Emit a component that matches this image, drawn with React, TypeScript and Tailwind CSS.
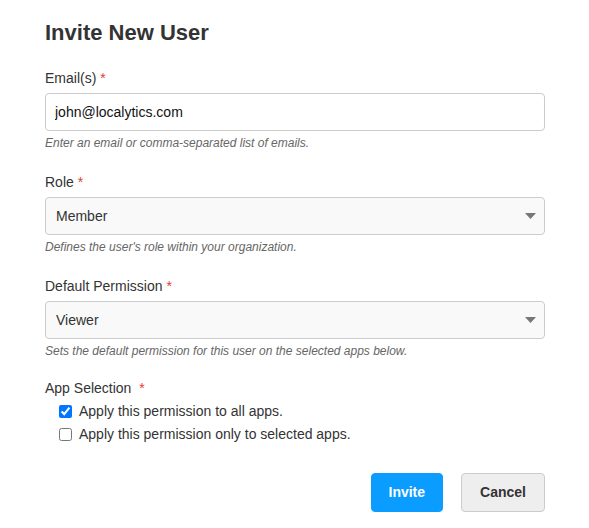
import React, { useState } from 'react';

const Required = () => <span className="text-[#e53935] ml-1">*</span>;

const Help = ({ children }: { children: React.ReactNode }) => (
  <p className="mt-1 text-[12px] leading-4 italic text-[#666]">{children}</p>
);

const Select = ({ value }: { value: string }) => (
  <div className="mt-[5px] h-[38px] flex items-center justify-between rounded border border-[#ccc] bg-[#f9f9f9] pl-[10px] pr-[8px] text-[14px] text-[#333]">
    <span>{value}</span>
    <svg width="11" height="6" viewBox="0 0 11 6">
      <path d="M0 0 H11 L5.5 6 Z" fill="#777" />
    </svg>
  </div>
);

export default function App() {
  const [email, setEmail] = useState('john@localytics.com');
  const [allApps, setAllApps] = useState(true);

  return (
    <div className="min-h-screen bg-white font-['Liberation_Sans',Arial,sans-serif] text-[#333]">
      <div className="ml-[45px] w-[500px] pt-[20px]">
        <h1 className="text-[22px] leading-[26px] font-bold text-[#333]">Invite New User</h1>

        {/* Emails */}
        <div className="mt-[22px]">
          <label className="block text-[14px] leading-5">
            Email(s)
            <Required />
          </label>
          <input
            value={email}
            onChange={(e) => setEmail(e.target.value)}
            className="mt-[5px] block w-full h-[38px] rounded border border-[#ccc] bg-white px-[9px] text-[14px] text-[#111] outline-none"
          />
          <Help>Enter an email or comma-separated list of emails.</Help>
        </div>

        {/* Role */}
        <div className="mt-[21px]">
          <label className="block text-[14px] leading-5">
            Role
            <Required />
          </label>
          <Select value="Member" />
          <Help>Defines the user's role within your organization.</Help>
        </div>

        {/* Default permission */}
        <div className="mt-[21px]">
          <label className="block text-[14px] leading-5">
            Default Permission
            <Required />
          </label>
          <Select value="Viewer" />
          <Help>Sets the default permission for this user on the selected apps below.</Help>
        </div>

        {/* App selection */}
        <div className="mt-[19px]">
          <label className="block text-[14px] leading-5">
            App Selection <Required />
          </label>
          <div className="mt-[3px] flex flex-col gap-[3px] pl-[14px]">
            <label className="flex items-center gap-[7px] text-[14px] leading-5">
              <input
                type="checkbox"
                checked={allApps}
                onChange={() => setAllApps(true)}
                className="m-0 w-[13px] h-[13px]"
              />
              Apply this permission to all apps.
            </label>
            <label className="flex items-center gap-[7px] text-[14px] leading-5">
              <input
                type="checkbox"
                checked={!allApps}
                onChange={() => setAllApps(false)}
                className="m-0 w-[13px] h-[13px]"
              />
              Apply this permission only to selected apps.
            </label>
          </div>
        </div>

        <div className="mt-[29px] flex justify-end gap-[18px]">
          <button className="h-[39px] px-[17px] rounded border border-[#0a9cff] bg-[#0a9cff] text-[14px] font-bold text-white">
            Invite
          </button>
          <button className="h-[39px] px-[18px] rounded border border-[#ccc] bg-[#eee] text-[14px] font-bold text-[#333]">
            Cancel
          </button>
        </div>
      </div>
    </div>
  );
}
